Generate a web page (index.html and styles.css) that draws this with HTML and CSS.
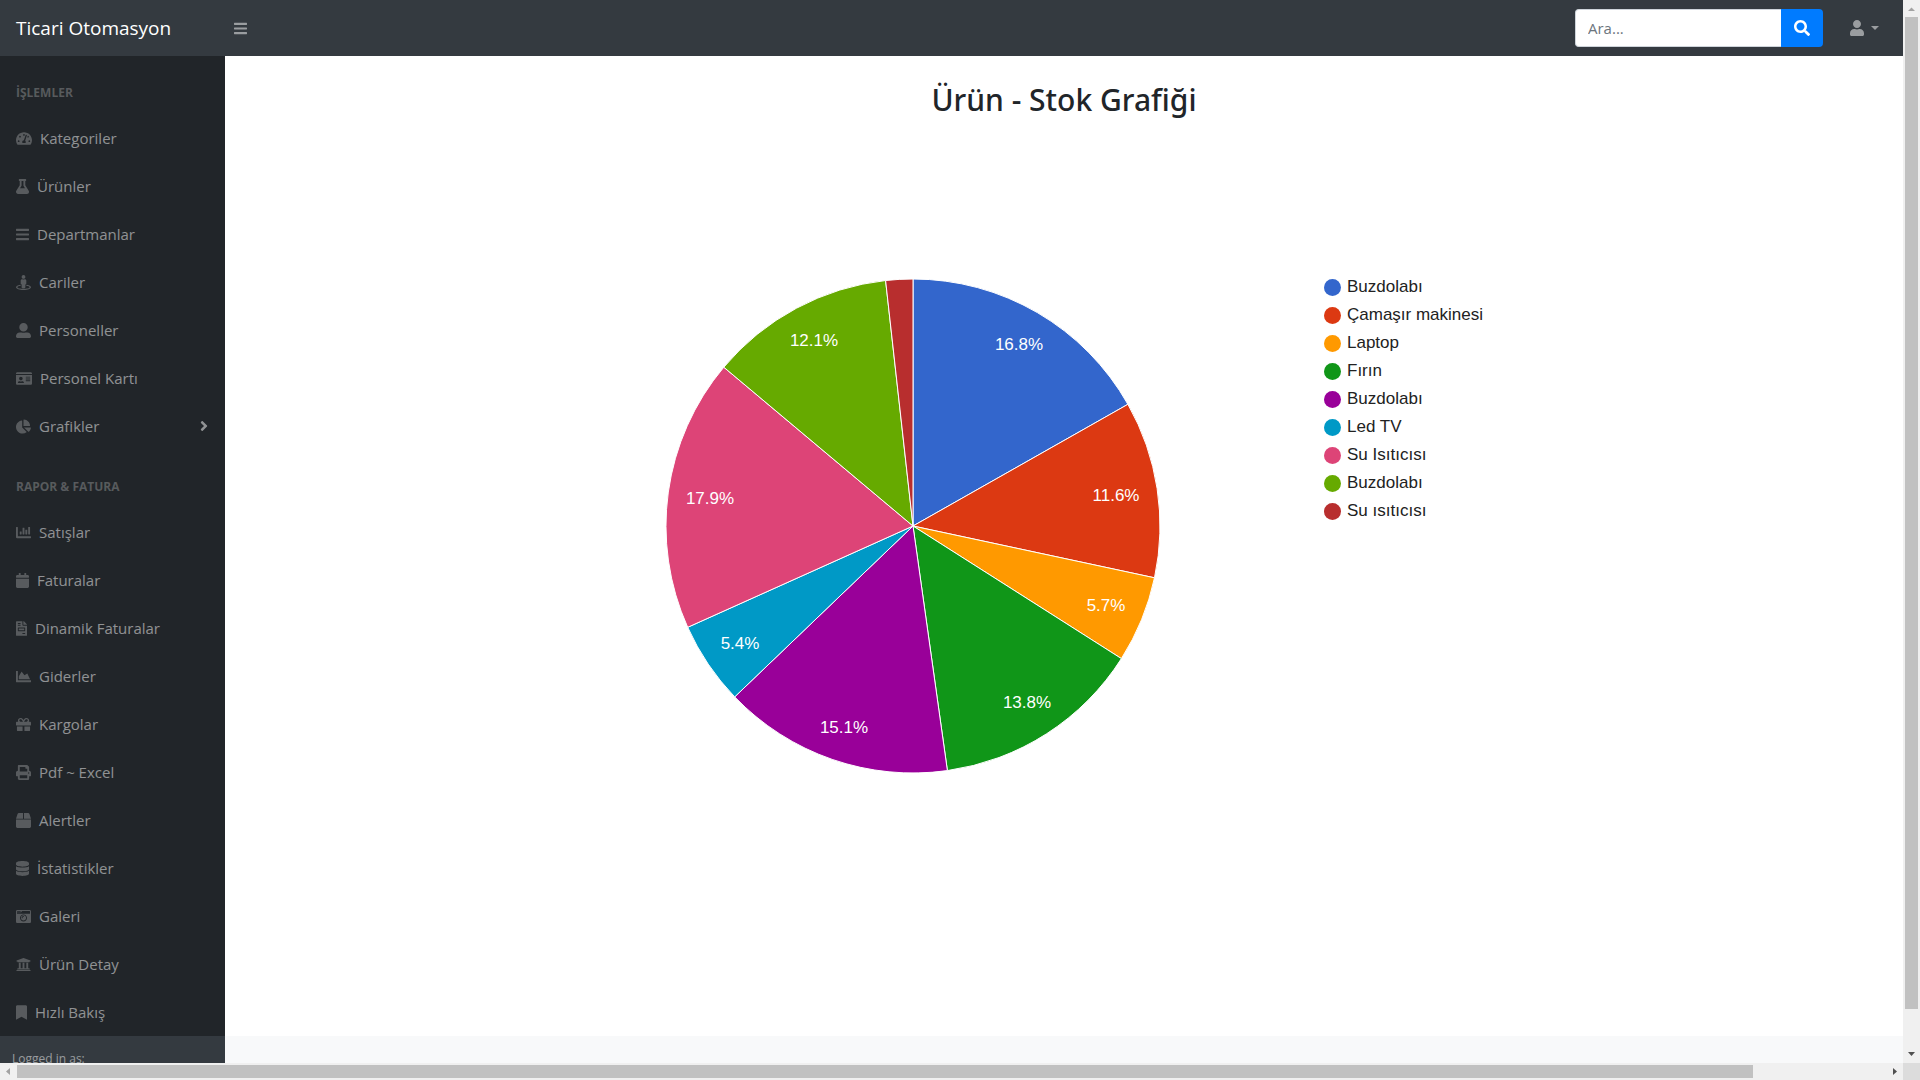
FILE: index.html
```html
<!DOCTYPE html>
<html lang="tr">
<head>
<meta charset="utf-8">
<meta name="viewport" content="width=device-width, initial-scale=1">
<title>Ürün - Stok Grafiği</title>
<link rel="stylesheet" href="styles.css">
</head>
<body>
<div class="window">
  <div class="page">
    <header class="topbar">
      <a class="brand" href="#">Ticari Otomasyon</a>
      <button class="toggle" type="button" aria-label="Menü"><svg class="icon icon-sm" viewBox="0 0 448 512"><path d="M16 132h416c8.837 0 16-7.163 16-16V76c0-8.837-7.163-16-16-16H16C7.163 60 0 67.163 0 76v40c0 8.837 7.163 16 16 16zm0 160h416c8.837 0 16-7.163 16-16v-40c0-8.837-7.163-16-16-16H16c-8.837 0-16 7.163-16 16v40c0 8.837 7.163 16 16 16zm0 160h416c8.837 0 16-7.163 16-16v-40c0-8.837-7.163-16-16-16H16c-8.837 0-16 7.163-16 16v40c0 8.837 7.163 16 16 16z"/></svg></button>
      <form class="search">
        <input class="search-input" type="text" placeholder="Ara..." aria-label="Ara">
        <button class="search-button" type="button" aria-label="Ara"><svg class="icon-search" viewBox="0 0 512 512"><path d="M505 442.7L405.3 343c-4.5-4.5-10.6-7-17-7H372c27.6-35.3 44-79.7 44-128C416 93.1 322.9 0 208 0S0 93.1 0 208s93.1 208 208 208c48.3 0 92.7-16.4 128-44v16.3c0 6.4 2.5 12.5 7 17l99.7 99.7c9.4 9.4 24.6 9.4 33.9 0l28.3-28.3c9.4-9.4 9.4-24.6.1-34zM208 336c-70.7 0-128-57.2-128-128 0-70.7 57.2-128 128-128 70.7 0 128 57.2 128 128 0 70.7-57.2 128-128 128z"/></svg></button>
      </form>
      <button class="account" type="button" aria-label="Hesap"><svg class="icon-account" viewBox="0 0 448 512"><path d="M224 256c70.7 0 128-57.3 128-128S294.7 0 224 0 96 57.3 96 128s57.3 128 128 128zm89.6 32h-16.7c-22.2 10.2-46.9 16-72.9 16s-50.6-5.8-72.9-16h-16.7C60.2 288 0 348.2 0 422.4V464c0 26.5 21.5 48 48 48h352c26.5 0 48-21.5 48-48v-41.6c0-74.2-60.2-134.4-134.4-134.4z"/></svg><span class="caret"></span></button>
    </header>
    <div class="layout">
      <nav class="sidebar">
        <div class="section-title">İŞLEMLER</div>
        <a class="item" href="#"><svg class="icon icon-lg" viewBox="0 0 576 512"><path d="M288 32C128.94 32 0 160.94 0 320c0 52.8 14.25 102.26 39.06 144.8 5.61 9.62 16.3 15.2 27.44 15.2h443c11.14 0 21.83-5.58 27.44-15.2C561.75 422.26 576 372.8 576 320c0-159.06-128.94-288-288-288zm0 64c14.71 0 26.58 10.13 30.32 23.65-1.11 2.26-2.64 4.23-3.45 6.67l-9.22 27.67c-5.13 3.49-10.97 6.01-17.64 6.01-17.67 0-32-14.33-32-32S270.33 96 288 96zM96 384c-17.67 0-32-14.33-32-32s14.33-32 32-32 32 14.33 32 32-14.33 32-32 32zm48-160c-17.67 0-32-14.33-32-32s14.33-32 32-32 32 14.33 32 32-14.33 32-32 32zm246.77-72.41l-61.33 184C343.13 347.33 352 364.54 352 384c0 11.72-3.38 22.55-8.88 32H232.88c-5.5-9.45-8.88-20.28-8.88-32 0-33.94 26.5-61.43 59.9-63.59l61.34-184.01c4.17-12.56 17.73-19.45 30.36-15.17 12.57 4.19 19.35 17.79 15.17 30.36zm14.66 57.2l15.52-46.55c3.47-1.29 7.13-2.23 11.05-2.23 17.67 0 32 14.33 32 32s-14.33 32-32 32c-11.38-.01-20.89-6.28-26.57-15.22zM480 384c-17.67 0-32-14.33-32-32s14.33-32 32-32 32 14.33 32 32-14.33 32-32 32z"/></svg>Kategoriler</a>
        <a class="item" href="#"><svg class="icon icon-sm" viewBox="0 0 448 512"><path d="M437.2 403.5L320 215V64h8c13.3 0 24-10.7 24-24V24c0-13.3-10.7-24-24-24H120c-13.3 0-24 10.7-24 24v16c0 13.3 10.7 24 24 24h8v151L10.8 403.5C-18.5 450.6 15.3 512 70.9 512h306.2c55.7 0 89.4-61.5 60.1-108.5zM137.9 320l48.2-77.6c3.7-5.2 5.8-11.6 5.8-18.4V64h64v160c0 6.9 2.2 13.2 5.8 18.4l48.2 77.6h-172z"/></svg>Ürünler</a>
        <a class="item" href="#"><svg class="icon icon-sm" viewBox="0 0 448 512"><path d="M16 132h416c8.837 0 16-7.163 16-16V76c0-8.837-7.163-16-16-16H16C7.163 60 0 67.163 0 76v40c0 8.837 7.163 16 16 16zm0 160h416c8.837 0 16-7.163 16-16v-40c0-8.837-7.163-16-16-16H16c-8.837 0-16 7.163-16 16v40c0 8.837 7.163 16 16 16zm0 160h416c8.837 0 16-7.163 16-16v-40c0-8.837-7.163-16-16-16H16c-8.837 0-16 7.163-16 16v40c0 8.837 7.163 16 16 16z"/></svg>Departmanlar</a>
        <a class="item" href="#"><svg class="icon icon-md" viewBox="0 0 512 512"><path d="M367.9 329.76c-4.62 5.3-9.78 10.1-15.9 13.65v22.94c66.52 9.34 112 28.05 112 49.65 0 30.93-93.12 56-208 56S48 446.93 48 416c0-21.6 45.48-40.3 112-49.65v-22.94c-6.12-3.55-11.28-8.35-15.9-13.65C58.87 345.34 0 378.05 0 416c0 53.02 114.62 96 256 96s256-42.98 256-96c0-37.95-58.87-70.66-144.1-86.24zM256 128c35.35 0 64-28.65 64-64S291.35 0 256 0s-64 28.65-64 64 28.65 64 64 64zm-64 192v96c0 17.67 14.33 32 32 32h64c17.67 0 32-14.33 32-32v-96c17.67 0 32-14.33 32-32v-96c0-26.51-21.49-48-48-48h-11.8c-11.07 5.03-23.26 8-36.2 8s-25.13-2.97-36.2-8H208c-26.51 0-48 21.49-48 48v96c0 17.67 14.33 32 32 32z"/></svg>Cariler</a>
        <a class="item" href="#"><svg class="icon icon-md" viewBox="0 0 512 512"><path d="M256 288c79.5 0 144-64.5 144-144S335.5 0 256 0 112 64.5 112 144s64.5 144 144 144zm128 32h-55.1c-22.2 10.2-46.9 16-72.9 16s-50.6-5.8-72.9-16H128C57.3 320 0 377.3 0 448v16c0 26.5 21.5 48 48 48h416c26.5 0 48-21.5 48-48v-16c0-70.7-57.3-128-128-128z"/></svg>Personeller</a>
        <a class="item" href="#"><svg class="icon icon-lg" viewBox="0 0 576 512"><path d="M528 32H48C21.5 32 0 53.5 0 80v16h576V80c0-26.5-21.5-48-48-48zM0 432c0 26.5 21.5 48 48 48h480c26.5 0 48-21.5 48-48V128H0v304zm352-232c0-4.4 3.6-8 8-8h144c4.4 0 8 3.6 8 8v16c0 4.4-3.6 8-8 8H360c-4.4 0-8-3.6-8-8v-16zm0 64c0-4.4 3.6-8 8-8h144c4.4 0 8 3.6 8 8v16c0 4.4-3.6 8-8 8H360c-4.4 0-8-3.6-8-8v-16zm0 64c0-4.4 3.6-8 8-8h144c4.4 0 8 3.6 8 8v16c0 4.4-3.6 8-8 8H360c-4.4 0-8-3.6-8-8v-16zM176 192c35.3 0 64 28.7 64 64s-28.7 64-64 64-64-28.7-64-64 28.7-64 64-64zM67.1 396.2C75.5 370.5 99.6 352 128 352h8.2c12.3 5.1 25.7 8 39.8 8s27.6-2.9 39.8-8h8.2c28.4 0 52.5 18.5 60.9 44.2 3.2 9.9-5.2 19.8-15.6 19.8H82.7c-10.4 0-18.8-10-15.6-19.8z"/></svg>Personel Kartı</a>
        <a class="item" href="#"><svg class="icon icon-md" viewBox="0 0 544 512"><path d="M527.79 288H290.5l158.03 158.03c6.04 6.04 15.98 6.53 22.19.68 38.7-36.46 65.32-85.61 73.13-140.86 1.34-9.46-6.51-17.85-16.06-17.85zm-15.83-64.8C503.72 103.74 408.26 8.28 288.8.04 279.68-.59 272 7.1 272 16.24V240h223.77c9.14 0 16.82-7.68 16.19-16.8zM224 288V50.71c0-9.55-8.39-17.4-17.84-16.06C86.99 51.49-4.1 155.6.14 280.37 4.5 408.51 114.83 513.59 243.03 511.98c50.4-.63 96.97-16.87 135.26-44.03 7.9-5.6 8.42-17.23 1.57-24.08L224 288z"/></svg>Grafikler<svg class="icon arrow" viewBox="0 0 256 512"><path d="M224.3 273l-136 136c-9.4 9.4-24.6 9.4-33.9 0l-22.6-22.6c-9.4-9.4-9.4-24.6 0-33.9l96.4-96.4-96.4-96.4c-9.4-9.4-9.4-24.6 0-33.9L54.3 103c9.4-9.4 24.6-9.4 33.9 0l136 136c9.5 9.4 9.5 24.6.1 34z"/></svg></a>
        <div class="section-title">RAPOR &amp; FATURA</div>
        <a class="item" href="#"><svg class="icon icon-md" viewBox="0 0 512 512"><path d="M332.8 320h38.4c6.4 0 12.8-6.4 12.8-12.8V172.8c0-6.4-6.4-12.8-12.8-12.8h-38.4c-6.4 0-12.8 6.4-12.8 12.8v134.4c0 6.4 6.4 12.8 12.8 12.8zm96 0h38.4c6.4 0 12.8-6.4 12.8-12.8V76.8c0-6.4-6.4-12.8-12.8-12.8h-38.4c-6.4 0-12.8 6.4-12.8 12.8v230.4c0 6.4 6.4 12.8 12.8 12.8zm-288 0h38.4c6.4 0 12.8-6.4 12.8-12.8v-70.4c0-6.4-6.4-12.8-12.8-12.8h-38.4c-6.4 0-12.8 6.4-12.8 12.8v70.4c0 6.4 6.4 12.8 12.8 12.8zm96 0h38.4c6.4 0 12.8-6.4 12.8-12.8V108.8c0-6.4-6.4-12.8-12.8-12.8h-38.4c-6.4 0-12.8 6.4-12.8 12.8v198.4c0 6.4 6.4 12.8 12.8 12.8zM496 384H64V80c0-8.84-7.16-16-16-16H16C7.16 64 0 71.16 0 80v336c0 17.67 14.33 32 32 32h464c8.84 0 16-7.16 16-16v-32c0-8.84-7.16-16-16-16z"/></svg>Satışlar</a>
        <a class="item" href="#"><svg class="icon icon-sm" viewBox="0 0 448 512"><path d="M12 192h424c6.6 0 12 5.4 12 12v260c0 26.5-21.5 48-48 48H48c-26.5 0-48-21.5-48-48V204c0-6.6 5.4-12 12-12zm436-44v-36c0-26.5-21.5-48-48-48h-48V12c0-6.6-5.4-12-12-12h-40c-6.6 0-12 5.4-12 12v52H160V12c0-6.6-5.4-12-12-12h-40c-6.6 0-12 5.4-12 12v52H48C21.5 64 0 85.5 0 112v36c0 6.6 5.4 12 12 12h424c6.6 0 12-5.4 12-12z"/></svg>Faturalar</a>
        <a class="item" href="#"><svg class="icon icon-xs" viewBox="0 0 384 512"><path d="M288 256H96v64h192v-64zm89-151L279.1 7c-4.5-4.5-10.6-7-17-7H256v128h128v-6.1c0-6.3-2.5-12.4-7-16.9zm-153 31V0H24C10.7 0 0 10.7 0 24v464c0 13.3 10.7 24 24 24h336c13.3 0 24-10.7 24-24V160H248c-13.2 0-24-10.8-24-24zM64 72c0-4.42 3.58-8 8-8h80c4.42 0 8 3.58 8 8v16c0 4.42-3.58 8-8 8H72c-4.42 0-8-3.58-8-8V72zm0 64c0-4.42 3.58-8 8-8h80c4.42 0 8 3.58 8 8v16c0 4.42-3.58 8-8 8H72c-4.42 0-8-3.58-8-8v-16zm256 304c0 4.42-3.58 8-8 8h-80c-4.42 0-8-3.58-8-8v-16c0-4.42 3.58-8 8-8h80c4.42 0 8 3.58 8 8v16zm0-200v96c0 8.84-7.16 16-16 16H80c-8.84 0-16-7.16-16-16v-96c0-8.84 7.16-16 16-16h224c8.84 0 16 7.16 16 16z"/></svg>Dinamik Faturalar</a>
        <a class="item" href="#"><svg class="icon icon-md" viewBox="0 0 512 512"><path d="M500 384c6.6 0 12 5.4 12 12v40c0 6.6-5.4 12-12 12H12c-6.6 0-12-5.4-12-12V76c0-6.6 5.4-12 12-12h40c6.6 0 12 5.4 12 12v308h436zM372.7 159.5L288 216l-85.3-113.7c-5.1-6.8-15.5-6.3-19.9 1L96 248v104h384l-89.9-187.8c-3.2-6.5-11.4-8.7-17.4-4.7z"/></svg>Giderler</a>
        <a class="item" href="#"><svg class="icon icon-md" viewBox="0 0 512 512"><path d="M32 448c0 17.7 14.3 32 32 32h160V320H32v128zm256 32h160c17.7 0 32-14.3 32-32V320H288v160zm192-320h-42.1c6.2-12.1 10.1-25.5 10.1-40 0-48.5-39.5-88-88-88-41.6 0-68.5 21.3-103 68.3-34.5-47-61.4-68.3-103-68.3-48.5 0-88 39.5-88 88 0 14.5 3.8 27.9 10.1 40H32c-17.7 0-32 14.3-32 32v80c0 8.8 7.2 16 16 16h480c8.8 0 16-7.2 16-16v-80c0-17.7-14.3-32-32-32zm-326.1 0c-22.1 0-40-17.9-40-40s17.9-40 40-40c19.9 0 34.6 3.3 86.1 80h-86.1zm206.1 0h-86.1c51.4-76.5 65.7-80 86.1-80 22.1 0 40 17.9 40 40s-17.9 40-40 40z"/></svg>Kargolar</a>
        <a class="item" href="#"><svg class="icon icon-md" viewBox="0 0 512 512"><path d="M448 192V77.25c0-8.49-3.37-16.62-9.37-22.63L393.37 9.37c-6-6-14.14-9.37-22.63-9.37H96C78.33 0 64 14.33 64 32v160c-35.35 0-64 28.65-64 64v112c0 8.84 7.16 16 16 16h48v96c0 17.67 14.33 32 32 32h320c17.67 0 32-14.33 32-32v-96h48c8.84 0 16-7.16 16-16V256c0-35.35-28.65-64-64-64zm-64 256H128v-96h256v96zm0-224H128V64h192v48c0 8.84 7.16 16 16 16h48v96zm48 72c-13.25 0-24-10.75-24-24 0-13.26 10.75-24 24-24s24 10.74 24 24c0 13.25-10.75 24-24 24z"/></svg>Pdf ~ Excel</a>
        <a class="item" href="#"><svg class="icon icon-md" viewBox="0 0 512 512"><path d="M509.5 184.6L458.9 32.8C452.4 13.2 434.1 0 413.4 0H272v192h238.7c-.4-2.5-.4-5-1.2-7.4zM240 0H98.6c-20.7 0-39 13.2-45.5 32.8L2.5 184.6c-.8 2.4-.8 4.9-1.2 7.4H240V0zM0 224v240c0 26.5 21.5 48 48 48h416c26.5 0 48-21.5 48-48V224H0z"/></svg>Alertler</a>
        <a class="item" href="#"><svg class="icon icon-sm" viewBox="0 0 448 512"><path d="M448 73.143v45.714C448 159.143 347.667 192 224 192S0 159.143 0 118.857V73.143C0 32.857 100.333 0 224 0s224 32.857 224 73.143zM448 176v102.857C448 319.143 347.667 352 224 352S0 319.143 0 278.857V176c48.125 33.143 136.208 48.572 224 48.572S399.874 209.143 448 176zm0 160v102.857C448 479.143 347.667 512 224 512S0 479.143 0 438.857V336c48.125 33.143 136.208 48.572 224 48.572S399.874 369.143 448 336z"/></svg>İstatistikler</a>
        <a class="item" href="#"><svg class="icon icon-md" viewBox="0 0 512 512"><path d="M48 32C21.5 32 0 53.5 0 80v352c0 26.5 21.5 48 48 48h416c26.5 0 48-21.5 48-48V80c0-26.5-21.5-48-48-48H48zm0 32h106c3.3 0 6 2.7 6 6v20c0 3.3-2.7 6-6 6H38c-3.3 0-6-2.7-6-6V80c0-8.8 7.2-16 16-16zm426 96H38c-3.3 0-6-2.7-6-6v-36c0-3.3 2.7-6 6-6h138l30.2-45.3c1.1-1.7 3-2.7 5-2.7H464c8.8 0 16 7.2 16 16v74c0 3.3-2.7 6-6 6zM256 424c-66.2 0-120-53.8-120-120s53.8-120 120-120 120 53.8 120 120-53.8 120-120 120zm0-208c-48.5 0-88 39.5-88 88s39.5 88 88 88 88-39.5 88-88-39.5-88-88-88zm-48 104c-8.8 0-16-7.2-16-16 0-35.3 28.7-64 64-64 8.8 0 16 7.2 16 16s-7.2 16-16 16c-17.6 0-32 14.4-32 32 0 8.8-7.2 16-16 16z"/></svg>Galeri</a>
        <a class="item" href="#"><svg class="icon icon-md" viewBox="0 0 512 512"><path d="M496 128v16a8 8 0 0 1-8 8h-24v12c0 6.627-5.373 12-12 12H60c-6.627 0-12-5.373-12-12v-12H24a8 8 0 0 1-8-8v-16a8 8 0 0 1 4.941-7.392l232-88a7.996 7.996 0 0 1 6.118 0l232 88A8 8 0 0 1 496 128zm-24 304H40c-13.255 0-24 10.745-24 24v16a8 8 0 0 0 8 8h464a8 8 0 0 0 8-8v-16c0-13.255-10.745-24-24-24zM96 192v192H60c-6.627 0-12 5.373-12 12v20h416v-20c0-6.627-5.373-12-12-12h-36V192h-64v192h-64V192h-64v192h-64V192H96z"/></svg>Ürün Detay</a>
        <a class="item" href="#"><svg class="icon icon-xs" viewBox="0 0 384 512"><path d="M0 512V48C0 21.49 21.49 0 48 0h288c26.51 0 48 21.49 48 48v464L192 400 0 512z"/></svg>Hızlı Bakış</a>
      </nav>
      <main class="content">
        <h2 class="title">Ürün - Stok Grafiği</h2>
        <figure class="chart">
          <svg class="pie" viewBox="-248 -248 496 496" role="img" aria-label="Ürün stok dağılımı">
            <g class="slices">
              <path fill="#3366cc" d="M0 0L0 -247A247 247 0 0 1 214.9 -121.7Z"/>
              <path fill="#dc3912" d="M0 0L214.9 -121.7A247 247 0 0 1 241.5 51.8Z"/>
              <path fill="#ff9900" d="M0 0L241.5 51.8A247 247 0 0 1 208.4 132.6Z"/>
              <path fill="#109618" d="M0 0L208.4 132.6A247 247 0 0 1 34.4 244.6Z"/>
              <path fill="#990099" d="M0 0L34.4 244.6A247 247 0 0 1 -178.3 170.9Z"/>
              <path fill="#0099c6" d="M0 0L-178.3 170.9A247 247 0 0 1 -225.3 101.3Z"/>
              <path fill="#dd4477" d="M0 0L-225.3 101.3A247 247 0 0 1 -189.2 -158.8Z"/>
              <path fill="#66aa00" d="M0 0L-189.2 -158.8A247 247 0 0 1 -27.4 -245.5Z"/>
              <path fill="#b82e2e" d="M0 0L-27.4 -245.5A247 247 0 0 1 0 -247Z"/>
            </g>
            <g class="shares">
              <text x="106" y="-176">16.8%</text>
              <text x="203" y="-25">11.6%</text>
              <text x="193" y="85">5.7%</text>
              <text x="114" y="182">13.8%</text>
              <text x="-69" y="207">15.1%</text>
              <text x="-173" y="123">5.4%</text>
              <text x="-203" y="-22">17.9%</text>
              <text x="-99" y="-180">12.1%</text>
            </g>
          </svg>
          <ul class="legend">
            <li class="entry"><span class="dot blue"></span>Buzdolabı</li>
            <li class="entry"><span class="dot red"></span>Çamaşır makinesi</li>
            <li class="entry"><span class="dot orange"></span>Laptop</li>
            <li class="entry"><span class="dot green"></span>Fırın</li>
            <li class="entry"><span class="dot purple"></span>Buzdolabı</li>
            <li class="entry"><span class="dot cyan"></span>Led TV</li>
            <li class="entry"><span class="dot pink"></span>Su Isıtıcısı</li>
            <li class="entry"><span class="dot lime"></span>Buzdolabı</li>
            <li class="entry"><span class="dot brick"></span>Su ısıtıcısı</li>
          </ul>
        </figure>
      </main>
      <div class="session">Logged in as:</div>
      <footer class="footer"></footer>
    </div>
  </div>
  <div class="scroll scroll-v" aria-hidden="true">
    <svg class="step step-off" viewBox="0 0 17 17"><path d="M5 11L8.500 7.500L12 11Z"/></svg>
    <div class="track"><div class="thumb thumb-v"></div></div>
    <svg class="step" viewBox="0 0 17 17"><path d="M5 6L12 6L8.500 10Z"/></svg>
  </div>
  <div class="scroll scroll-h" aria-hidden="true">
    <svg class="step step-off" viewBox="0 0 17 17"><path d="M10 5L10 12L6 8.500Z"/></svg>
    <div class="track"><div class="thumb thumb-h"></div></div>
    <svg class="step" viewBox="0 0 17 17"><path d="M7 5L11 8.500L7 12Z"/></svg>
  </div>
  <div class="corner"></div>
</div>
</body>
</html>
```
FILE: styles.css
```css
* {
  box-sizing: border-box;
}

body {
  margin: 0;
  background: #fff;
  color: #212529;
  font-family: "Open Sans", "Noto Sans", sans-serif;
  font-size: 15px;
  line-height: 24px;
}

a {
  text-decoration: none;
}

button {
  padding: 0;
  border: 0;
  background: none;
  font: inherit;
}

svg {
  fill: currentColor;
}

.window {
  display: grid;
  grid-template: minmax(0, 1fr) 17px / minmax(0, 1fr) 17px;
  height: 100vh;
}

.page {
  overflow: auto;
  scrollbar-width: none;
}

/* Top bar */

.topbar {
  display: flex;
  align-items: center;
  height: 56px;
  background: #343a40;
  color: rgba(255, 255, 255, 0.5);
}

.brand {
  width: 226px;
  padding-left: 16px;
  color: #fff;
  font-size: 19px;
  line-height: 30px;
}

.toggle {
  display: flex;
  padding: 8px;
  color: inherit;
}

.search {
  display: flex;
  width: 248px;
  height: 38px;
  margin-left: auto;
}

.search-input {
  flex: 1;
  min-width: 0;
  padding: 6px 12px;
  border: 1px solid #ced4da;
  border-right: 0;
  border-radius: 4px 0 0 4px;
  background: #fff;
  color: #495057;
  font: inherit;
}

.search-input::placeholder {
  color: #6c757d;
  opacity: 1;
}

.search-button {
  display: flex;
  align-items: center;
  justify-content: center;
  width: 42px;
  border-radius: 0 4px 4px 0;
  background: #007bff;
  color: #fff;
}

.icon-search {
  width: 16px;
  height: 16px;
}

.account {
  display: flex;
  align-items: center;
  gap: 7px;
  margin: 0 24px 0 27px;
  color: inherit;
}

.icon-account {
  width: 14px;
  height: 16px;
}

.caret {
  border: 4px solid transparent;
  border-top-color: currentColor;
  border-bottom: 0;
}

/* Side navigation */

.layout {
  display: grid;
  grid-template-columns: 225px minmax(0, 1fr);
}

.sidebar {
  background: #212529;
}

.section-title {
  padding: 28px 16px 12px;
  color: rgba(255, 255, 255, 0.25);
  font-size: 12px;
  font-weight: 700;
  line-height: 18px;
}

.item {
  display: flex;
  align-items: center;
  height: 48px;
  padding: 0 16px;
  color: rgba(255, 255, 255, 0.5);
}

.icon {
  flex: none;
  height: 15px;
}

.item .icon {
  margin-right: 8px;
  color: rgba(255, 255, 255, 0.25);
}

.icon-lg {
  width: 16px;
}

.icon-md {
  width: 15px;
}

.icon-sm {
  width: 13px;
}

.icon-xs {
  width: 11px;
}

.item .arrow {
  width: 8px;
  height: 16px;
  margin: 0 1px 0 auto;
  color: rgba(255, 255, 255, 0.5);
}

.session {
  padding: 12px;
  background: #343a40;
  color: rgba(255, 255, 255, 0.5);
  font-size: 12px;
  line-height: 21px;
}

/* Content */

.content {
  padding: 24px;
}

.title {
  margin: 0;
  font-family: "Noto Sans", "Open Sans", sans-serif;
  font-size: 30px;
  font-weight: 500;
  line-height: 40px;
  text-align: center;
}

.chart {
  display: flex;
  align-items: flex-start;
  gap: 163px;
  width: 1000px;
  max-width: 100%;
  margin: 153px auto 0;
  padding-left: 101px;
  font-family: "Liberation Sans", Arial, sans-serif;
  font-size: 17px;
}

.pie {
  flex: 0 1 496px;
  margin-top: 5px;
}

.slices {
  stroke: #fff;
  stroke-width: 1px;
}

.shares {
  fill: #fff;
  text-anchor: middle;
}

.legend {
  flex: none;
  margin: 0;
  padding: 0;
  list-style: none;
}

.entry {
  display: flex;
  align-items: center;
  gap: 6px;
  height: 28px;
  color: #222;
}

.dot {
  width: 17px;
  height: 17px;
  border-radius: 50%;
}

.blue { background: #3366cc; }
.red { background: #dc3912; }
.orange { background: #ff9900; }
.green { background: #109618; }
.purple { background: #990099; }
.cyan { background: #0099c6; }
.pink { background: #dd4477; }
.lime { background: #66aa00; }
.brick { background: #b82e2e; }

.footer {
  background: #f8f9fa;
}

/* Scroll bars */

.scroll {
  display: flex;
  background: #f0f0f0;
}

.scroll-v {
  flex-direction: column;
}

.track {
  flex: 1;
}

.step {
  flex: none;
  width: 17px;
  height: 17px;
  color: #505050;
}

.step-off {
  color: #a3a3a3;
}

.thumb {
  background: #c1c1c1;
}

.thumb-v {
  width: 13px;
  height: 96.4%;
  margin: 0 2px;
}

.thumb-h {
  width: 92.9%;
  height: 13px;
  margin: 2px 0;
}

.corner {
  background: #dcdcdc;
}
```
